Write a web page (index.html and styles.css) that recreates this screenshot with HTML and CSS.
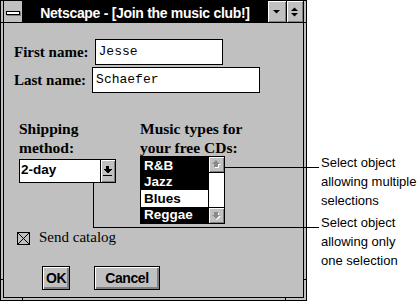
FILE: index.html
```html
<!DOCTYPE html>
<html lang="en">
<head>
    <meta charset="UTF-8">
    <title>Netscape - [Join the music club!]</title>
    <link rel="stylesheet" href="styles.css">
</head>
<body>
    <div class="screen">
        <div class="window">
            <div class="frame">
                <div class="titlebar">
                    <div class="sysmenu"><span class="sysbar"></span></div>
                    <div class="caption">Netscape - [Join the music club!]</div>
                    <div class="tbtn min">
                        <svg width="18" height="21" viewBox="0 0 18 21"><polygon points="5,9 12,9 8.5,12.5" fill="#000"/></svg>
                    </div>
                    <div class="tbtn restore">
                        <svg width="16" height="21" viewBox="0 0 16 21"><polygon points="4,10 11,10 7.5,6.5" fill="#000"/><polygon points="4,12 11,12 7.5,15.5" fill="#000"/></svg>
                    </div>
                </div>
                <div class="client">
                    <div class="field">
                        <label>First name:</label>
                        <div class="textbox short">Jesse</div>
                    </div>
                    <div class="field second">
                        <label>Last name:</label>
                        <div class="textbox long">Schaefer</div>
                    </div>
                    <div class="choices">
                        <div class="col ship">
                            <div class="col-label">Shipping<br>method:</div>
                            <div class="combo">
                                <span class="combo-text">2-day</span>
                                <span class="combo-btn">
                                    <svg width="14" height="22" viewBox="0 0 14 22" shape-rendering="crispEdges"><rect x="5" y="6" width="3" height="3" fill="#000"/><polygon points="2,9 11,9 6.5,13.5" fill="#000"/><rect x="2" y="15" width="9" height="1" fill="#000"/></svg>
                                </span>
                            </div>
                        </div>
                        <div class="col music">
                            <div class="col-label">Music types for<br>your free CDs:</div>
                            <div class="listbox">
                                <div class="items">
                                    <div class="item sel tall">R&amp;B</div>
                                    <div class="item sel">Jazz</div>
                                    <div class="item tall">Blues</div>
                                    <div class="item sel">Reggae</div>
                                </div>
                                <div class="scroll">
                                    <div class="sbtn up">
                                        <svg width="15" height="15" viewBox="0 0 15 15"><polygon points="8,4 12,8 10,8 10,11 6,11 6,8 4,8" fill="#fff"/><polygon points="7,3 11,7 9,7 9,10 5,10 5,7 3,7" fill="#8a8a8a"/></svg>
                                    </div>
                                    <div class="sbtn down">
                                        <svg width="15" height="15" viewBox="0 0 15 15"><polygon points="8,12 12,8 10,8 10,5 6,5 6,8 4,8" fill="#fff"/><polygon points="7,11 11,7 9,7 9,4 5,4 5,7 3,7" fill="#8a8a8a"/></svg>
                                    </div>
                                </div>
                            </div>
                        </div>
                    </div>
                    <div class="check-row">
                        <svg class="checkbox" width="13" height="13" viewBox="0 0 13 13" shape-rendering="crispEdges"><rect x="0.5" y="0.5" width="12" height="12" fill="none" stroke="#000"/><line x1="1" y1="1" x2="12" y2="12" stroke="#000"/><line x1="12" y1="1" x2="1" y2="12" stroke="#000"/></svg>
                        <span>Send catalog</span>
                    </div>
                    <div class="buttons">
                        <div class="btn ok">OK</div>
                        <div class="btn cancel">Cancel</div>
                    </div>
                </div>
            </div>
            <span class="tick left-top"></span>
            <span class="tick right-top"></span>
            <span class="tick left-bottom"></span>
            <span class="tick right-bottom"></span>
            <span class="tick bottom-left"></span>
            <span class="tick bottom-right"></span>
        </div>

        <span class="line h1"></span>
        <span class="line v2"></span>
        <span class="line h2"></span>
        <div class="note note1">Select object<br>allowing multiple<br>selections</div>
        <div class="note note2">Select object<br>allowing only<br>one selection</div>
    </div>
</body>
</html>
```

FILE: styles.css
```css
body {
    margin: 0;
    background-color: #fff;
    font-family: "Liberation Sans", Arial, sans-serif;
}

.screen {
    position: relative;
    width: 419px;
    height: 302px;
    overflow: hidden;
}

.window {
    position: relative;
    width: 307px;
    height: 301px;
    box-sizing: border-box;
    border: 1px solid #000;
    padding: 0 2px 2px;
    background-color: #c0c0c0;
}

.frame {
    height: 100%;
    box-sizing: border-box;
    border: 1px solid #000;
    border-top: 0;
    display: flex;
    flex-direction: column;
}

/* title bar */
.titlebar {
    display: flex;
    height: 21px;
    border-bottom: 1px solid #000;
}

.sysmenu {
    width: 18px;
    display: flex;
    justify-content: center;
    padding-top: 10px;
    box-sizing: border-box;
}

.sysbar {
    width: 12px;
    height: 2px;
    border: 1px solid #000;
    background-color: #fff;
    box-shadow: 1px 1px 0 #808080;
}

.caption {
    flex: 1;
    background-color: #000;
    color: #fff;
    font-weight: bold;
    font-size: 14px;
    letter-spacing: -0.3px;
    line-height: 24px;
    text-align: center;
    white-space: nowrap;
    overflow: hidden;
}

.tbtn {
    box-shadow: inset 1px 1px #fff, inset -1px -1px #808080;
}

.tbtn svg {
    display: block;
}

.tbtn.min {
    width: 18px;
}

.tbtn.restore {
    width: 16px;
    border-left: 1px solid #000;
}

/* dialog contents */
.client {
    flex: 1;
    padding: 16px 0 0 10px;
}

.field {
    display: flex;
    align-items: center;
}

.field.second {
    margin-top: 2px;
}

.field label {
    font-family: "Liberation Serif", "Times New Roman", serif;
    font-weight: bold;
    font-size: 15px;
    margin-right: 6px;
}

.textbox {
    height: 26px;
    box-sizing: border-box;
    border: 1px solid #000;
    background-color: #fff;
    font-family: "Liberation Mono", "Courier New", monospace;
    font-size: 13px;
    line-height: 24px;
    padding-left: 3px;
}

.textbox.short {
    width: 128px;
}

.textbox.long {
    width: 168px;
}

.choices {
    display: flex;
    margin-top: 26px;
}

.col-label {
    font-family: "Liberation Serif", "Times New Roman", serif;
    font-weight: bold;
    font-size: 15.5px;
    line-height: 19px;
}

.ship {
    margin-left: 5px;
    width: 121px;
}

.combo {
    margin-top: 2px;
    width: 97px;
    height: 24px;
    box-sizing: border-box;
    border: 1px solid #000;
    background-color: #fff;
    display: flex;
}

.combo-text {
    flex: 1;
    padding-left: 1px;
    font-weight: bold;
    font-size: 13.5px;
    line-height: 20px;
}

.combo-btn {
    width: 14px;
    border-left: 1px solid #000;
    background-color: #c0c0c0;
    box-shadow: inset 1px 1px #fff, inset -1px -1px #808080;
}

.combo-btn svg {
    display: block;
}

.listbox {
    margin-top: -1px;
    width: 85px;
    height: 68px;
    box-sizing: border-box;
    border: 1px solid #000;
    background-color: #fff;
    display: flex;
}

.items {
    flex: 1;
}

.item {
    height: 16px;
    padding-left: 3px;
    font-weight: bold;
    font-size: 13.5px;
    line-height: 16px;
}

.item.tall {
    height: 17px;
    line-height: 17px;
}

.item.sel {
    background-color: #000;
    color: #fff;
}

.scroll {
    width: 15px;
    border-left: 1px solid #000;
    display: flex;
    flex-direction: column;
    justify-content: space-between;
}

.sbtn {
    height: 15px;
    background-color: #c0c0c0;
    box-shadow: inset 1px 1px #fff, inset -1px -1px #808080;
}

.sbtn.up {
    border-bottom: 1px solid #000;
}

.sbtn.down {
    border-top: 1px solid #000;
}

.sbtn svg {
    display: block;
}

.check-row {
    display: flex;
    align-items: flex-start;
    margin: 6px 0 0 3px;
    font-family: "Liberation Serif", "Times New Roman", serif;
    font-size: 15px;
    line-height: 15px;
}

.checkbox {
    margin: 2px 9px 0 0;
}

.buttons {
    display: flex;
    gap: 24px;
    margin: 21px 0 0 28px;
}

.btn {
    height: 24px;
    box-sizing: border-box;
    border: 1px solid #000;
    box-shadow: inset 1px 1px #fff, inset -2px -2px #808080;
    font-weight: bold;
    font-size: 14px;
    letter-spacing: -0.4px;
    line-height: 22px;
    text-align: center;
}

.btn.ok {
    width: 28px;
}

.btn.cancel {
    width: 66px;
}

/* notches on the sizing frame */
.tick {
    position: absolute;
    background-color: #000;
}

.tick.left-top,
.tick.left-bottom {
    left: -1px;
    width: 4px;
    height: 1px;
}

.tick.right-top,
.tick.right-bottom {
    right: -1px;
    width: 4px;
    height: 1px;
}

.tick.left-top,
.tick.right-top {
    top: 21px;
}

.tick.left-bottom,
.tick.right-bottom {
    top: 278px;
}

.tick.bottom-left,
.tick.bottom-right {
    bottom: -1px;
    width: 1px;
    height: 4px;
}

.tick.bottom-left {
    left: 21px;
}

.tick.bottom-right {
    left: 284px;
}

/* callouts */
.line {
    position: absolute;
    background-color: #000;
}

.line.h1 {
    left: 224px;
    top: 167px;
    width: 95px;
    height: 1px;
}

.line.v2 {
    left: 93px;
    top: 182px;
    width: 1px;
    height: 45px;
}

.line.h2 {
    left: 93px;
    top: 227px;
    width: 226px;
    height: 1px;
}

.note {
    position: absolute;
    left: 321px;
    font-size: 13px;
    line-height: 19px;
    white-space: nowrap;
}

.note1 {
    top: 153px;
}

.note2 {
    top: 213px;
}
```
